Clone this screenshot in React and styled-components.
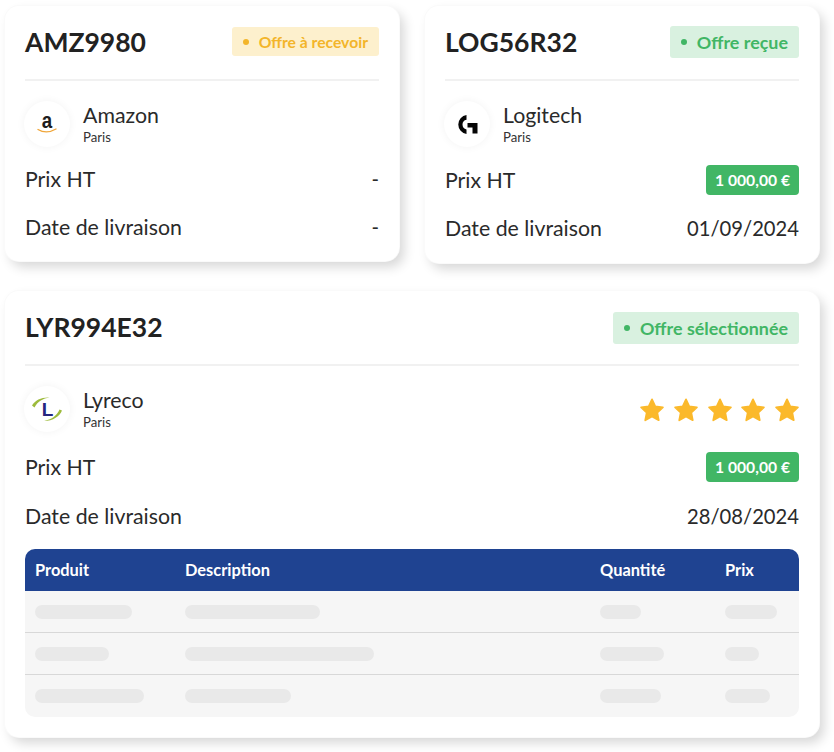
import React from "react"
import styled, { createGlobalStyle } from "styled-components"

const GlobalStyle = createGlobalStyle`
  html, body {
    margin: 0;
    background: #fff;
  }
  body {
    font-family: Lato, "Open Sans", "Liberation Sans", sans-serif;
    color: #222;
  }
  * { box-sizing: border-box; }
`

const Page = styled.div`
  width: 834px;
  height: 752px;
  overflow: hidden;
  padding: 6px 15px 0 5px;
  display: grid;
  grid-template-columns: 394px 394px;
  column-gap: 26px;
  row-gap: 28px;
  align-content: start;
  align-items: start;
`

const Card = styled.section`
  grid-column: ${p => (p.$wide ? "1 / -1" : "auto")};
  height: ${p => p.$height}px;
  padding: 0 20px;
  background: #fff;
  border-radius: 14px;
  box-shadow: 0 0 0 1px #fafafa, 5px 6px 12px rgba(0, 0, 0, 0.16);
`

const Head = styled.header`
  height: 75px;
  padding-bottom: 2px;
  display: flex;
  align-items: center;
  justify-content: space-between;
  border-bottom: 2px solid #f1f1f1;
`

const Title = styled.h2`
  margin: 0;
  font-size: 26.5px;
  font-weight: 700;
  color: #222;
`

const Badge = styled.span`
  height: ${p => p.$height}px;
  margin-top: ${p => p.$drop || 0}px;
  padding: 0 11px;
  display: flex;
  align-items: center;
  gap: ${p => p.$gap}px;
  border-radius: 3px;
  font-size: ${p => p.$size}px;
  font-weight: 700;
  color: ${p => (p.$tone === "amber" ? "#f3b52a" : "#41b665")};
  background: ${p => (p.$tone === "amber" ? "#fdf0cd" : "#d9f1e0")};
  &::before {
    content: "";
    width: 6px;
    height: 6px;
    border-radius: 50%;
    background: currentColor;
  }
`

const Supplier = styled.div`
  height: 60px;
  margin-top: 13px;
  display: flex;
  align-items: center;
  justify-content: space-between;
`

const Identity = styled.div`
  display: flex;
  align-items: center;
  gap: 13px;
`

const Avatar = styled.div`
  width: 46px;
  height: 46px;
  margin-left: -1px;
  border-radius: 50%;
  background: #fff;
  box-shadow: 0 0 8px rgba(0, 0, 0, 0.05);
  display: flex;
  align-items: center;
  justify-content: center;
`

const Name = styled.div`
  font-size: 21.3px;
  line-height: 26px;
  color: #2a2a2a;
`

const City = styled.div`
  margin-top: 1px;
  font-size: 13.2px;
  line-height: 17px;
  color: #333;
`

const Row = styled.div`
  height: ${p => p.$height}px;
  display: flex;
  align-items: center;
  justify-content: space-between;
  font-size: 21.3px;
  color: #2a2a2a;
`

const Details = styled.div`
  margin-top: ${p => p.$top}px;
`

const Value = styled.span`
  font-size: 20.2px;
`

const Price = styled.span`
  height: 30px;
  padding: 0 9px;
  display: flex;
  align-items: center;
  border-radius: 4px;
  background: #41b665;
  color: #fff;
  font-size: 15.7px;
  font-weight: 700;
`

const Stars = styled.div`
  display: flex;
  gap: 9.7px;
  margin-top: 1px;
`

const Table = styled.div`
  margin-top: 9px;
  border-radius: 10px;
  overflow: hidden;
  background: #f6f6f6;
`

const TableRow = styled.div`
  height: 42px;
  display: grid;
  grid-template-columns: 150px 415px 125px 1fr;
  padding-left: 10px;
  align-items: center;
  border-bottom: ${p => (p.$line ? "1px solid #d8d8d8" : "none")};
`

const HeadRow = styled(TableRow)`
  padding-bottom: 2px;
  background: #1f4391;
  color: #fff;
  font-size: 16.4px;
  font-weight: 700;
`

const Bar = styled.div`
  height: 14px;
  border-radius: 7px;
  background: #e9e9e9;
`

const AmazonLogo = () => (
  <svg width="30" height="30" viewBox="-3 -3 30 30">
    <text
      x="0"
      y="15.500"
      transform="translate(12 0) scale(0.85 1)"
      textAnchor="middle"
      fontFamily="Liberation Sans"
      fontWeight="700"
      fontSize="22"
      fill="#1d1d1d"
    >
      a
    </text>
    <path d="M3 17.500c5 3 12 3 18-.5" fill="none" stroke="#f0a63a" strokeWidth="1.400" strokeLinecap="round" />
  </svg>
)

const LogitechLogo = () => (
  <svg width="24" height="24" viewBox="0 0 24 24">
    <path d="M11.500 3v4.700a5 5 0 0 0 0 9.800V22a9.600 9.600 0 0 1 0-19Z" fill="#050505" />
    <path d="M12.500 11H22.500V21.500H17.500V15.500H12.500Z" fill="#050505" />
  </svg>
)

const LyrecoLogo = () => (
  <svg width="34" height="28" viewBox="0 0 34 28">
    <path d="M2 10.500C5 5 12 2 19.500 2.500C13 3.500 8 6 4.500 12.500Z" fill="#9dbb3c" />
    <path d="M32 15.500C30 21 23 26 14 26C21 24.500 27 21 29.500 14.500Z" fill="#9dbb3c" />
    <text x="17.500" y="21" textAnchor="middle" fontFamily="Liberation Sans" fontWeight="700" fontSize="19" fill="#27267f">L</text>
  </svg>
)

const Star = () => (
  <svg width="24" height="24" viewBox="1.300 1.500 21.400 21">
    <path
      d="M12 2.500l2.900 6.300 6.800.8-5 4.700 1.300 6.800-6-3.400-6 3.400 1.300-6.800-5-4.700 6.800-.8Z"
      fill="#fbb92b"
      stroke="#fbb92b"
      strokeWidth="1.600"
      strokeLinejoin="round"
    />
  </svg>
)

const skeleton = [
  [97, 135, 41, 52],
  [74, 189, 64, 34],
  [109, 106, 61, 45],
]

const OfferCard = ({ code, badge, logo, name, price, date, height, wide, rating, top, rowHeight, children }) => (
  <Card $height={height} $wide={wide}>
    <Head>
      <Title>{code}</Title>
      {badge}
    </Head>
    <Supplier>
      <Identity>
        <Avatar>{logo}</Avatar>
        <div>
          <Name>{name}</Name>
          <City>Paris</City>
        </div>
      </Identity>
      {rating}
    </Supplier>
    <Details $top={top}>
      <Row $height={rowHeight}>
        <span>Prix HT</span>
        {price}
      </Row>
      <Row $height={rowHeight}>
        <span>Date de livraison</span>
        <Value>{date}</Value>
      </Row>
    </Details>
    {children}
  </Card>
)

const App = () => (
  <>
    <GlobalStyle />
    <Page>
      <OfferCard
        code="AMZ9980"
        height={255}
        top={1}
        rowHeight={48}
        badge={<Badge $tone="amber" $height={29} $size={15.7} $gap={10}>Offre à recevoir</Badge>}
        logo={<AmazonLogo />}
        name="Amazon"
        price={<Value>-</Value>}
        date="-"
      />
      <OfferCard
        code="LOG56R32"
        height={257}
        top={2}
        rowHeight={48}
        badge={<Badge $tone="green" $height={32} $size={17.9} $gap={10}>Offre reçue</Badge>}
        logo={<LogitechLogo />}
        name="Logitech"
        price={<Price>1 000,00 €</Price>}
        date="01/09/2024"
      />
      <OfferCard
        code="LYR994E32"
        height={446}
        wide
        top={3}
        rowHeight={49}
        badge={<Badge $tone="green" $height={32} $size={17.9} $gap={10} $drop={2}>Offre sélectionnée</Badge>}
        logo={<LyrecoLogo />}
        name="Lyreco"
        price={<Price>1 000,00 €</Price>}
        date="28/08/2024"
        rating={
          <Stars>
            {[0, 1, 2, 3, 4].map(i => <Star key={i} />)}
          </Stars>
        }
      >
        <Table>
          <HeadRow>
            <span>Produit</span>
            <span>Description</span>
            <span>Quantité</span>
            <span>Prix</span>
          </HeadRow>
          {skeleton.map((widths, i) => (
            <TableRow key={i} $line={i < 2}>
              {widths.map((w, j) => <Bar key={j} style={{ width: w }} />)}
            </TableRow>
          ))}
        </Table>
      </OfferCard>
    </Page>
  </>
)

export default App
